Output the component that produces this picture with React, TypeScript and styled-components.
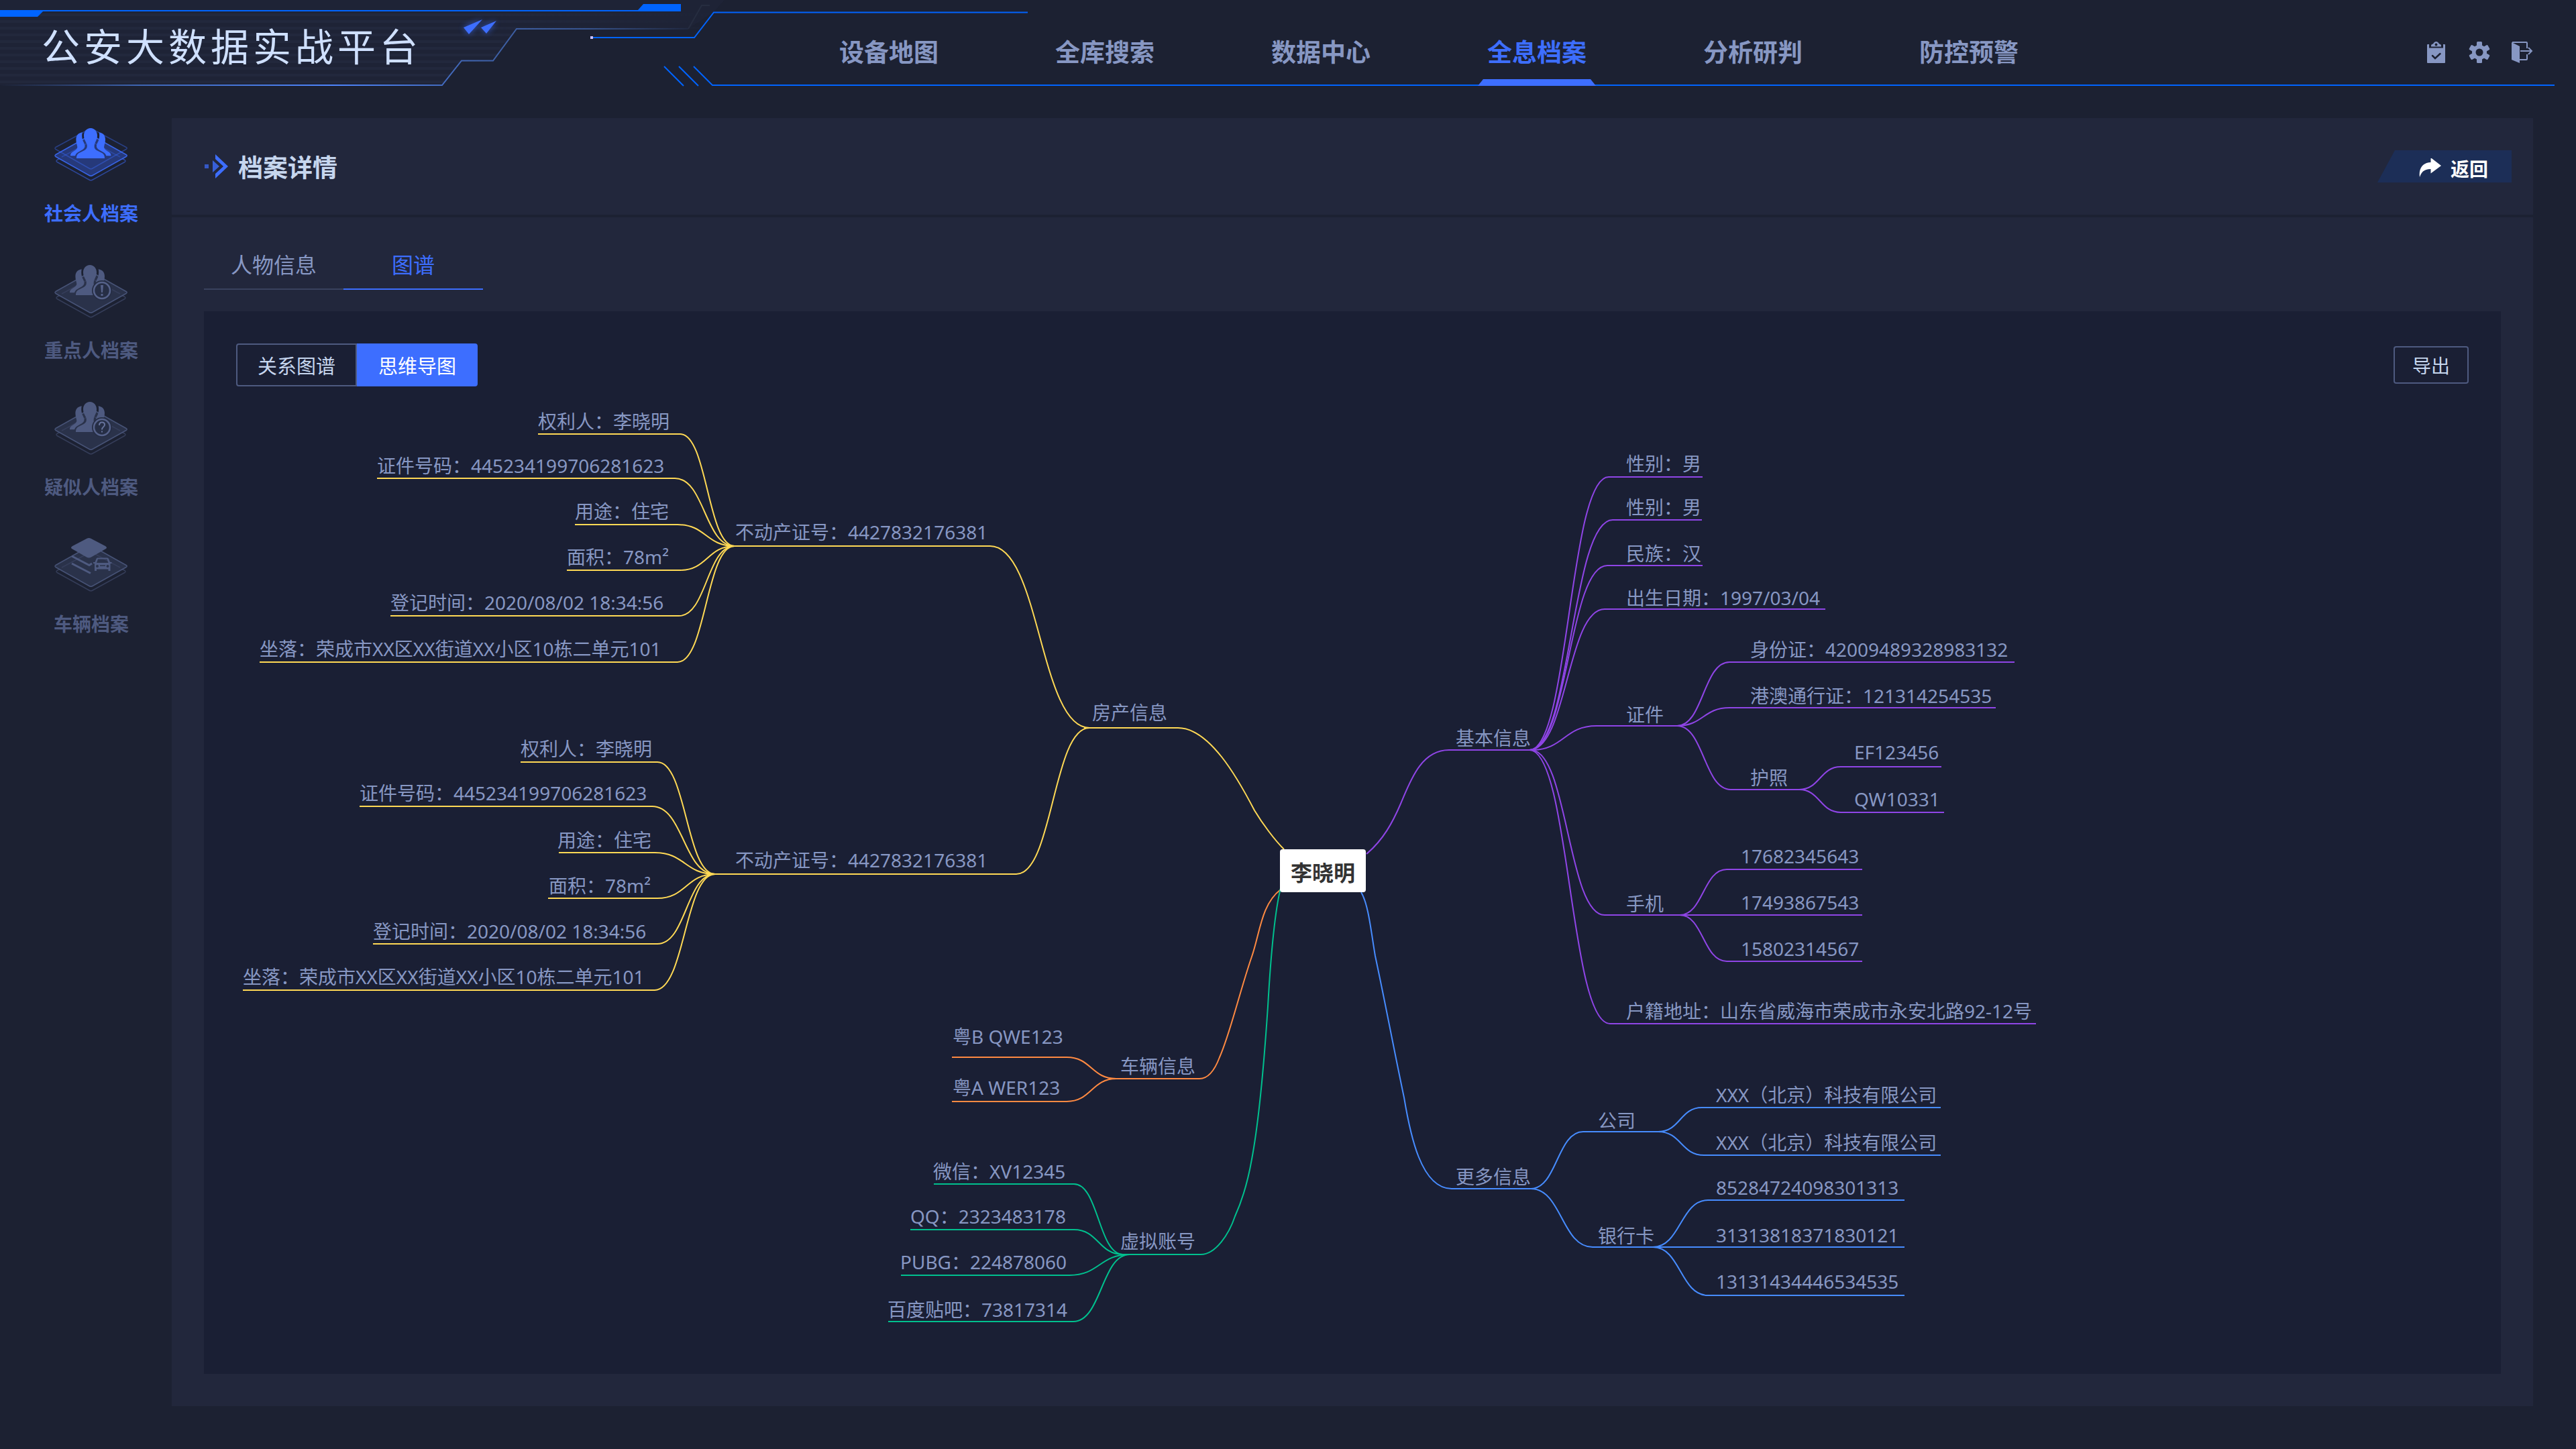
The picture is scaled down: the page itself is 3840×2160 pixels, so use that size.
import React from 'react';
import styled, { createGlobalStyle } from 'styled-components';

const color = {
  page: '#1c2132',
  panel: '#22273c',
  board: '#1a1f34',
  accent: '#3d6eff',
  line: '#0064ff',
  text: '#8797c3',
  bright: '#c6d6ee',
  muted: '#4e5a80',
};

const uiFont = '"Noto Sans CJK SC", "Noto Sans", sans-serif';
const mapFont = '"Noto Sans", "Noto Sans CJK SC", sans-serif';

const GlobalStyle = createGlobalStyle`
  *, *::before, *::after { box-sizing: border-box; }
  body { margin: 0; background: ${color.page}; font-family: ${uiFont}; color: ${color.text}; }
  button { font: inherit; color: inherit; background: none; border: 0; padding: 0; cursor: pointer; }
  a { color: inherit; text-decoration: none; }
  h1, h2 { margin: 0; }
  svg { display: block; }
`;

const Page = styled.div`
  display: flex;
  flex-direction: column;
  min-height: 100vh;
`;

/* ---------- header ---------- */

const Header = styled.header`
  position: relative;
  display: flex;
  height: 128px;

  &::after {
    content: '';
    position: absolute;
    left: 1062px;
    right: 32px;
    bottom: 0;
    height: 2px;
    background: ${color.line};
  }
`;

const HeaderArt = styled.svg`
  position: absolute;
  left: 0;
  top: 0;
`;

const Brand = styled.h1`
  position: relative;
  flex: 0 0 1237px;
  padding: 24px 0 0 62px;
  font-size: 57px;
  font-weight: 400;
  line-height: 84px;
  letter-spacing: 6px;
  color: #cfe0ff;
`;

const Nav = styled.nav`
  position: relative;
  z-index: 1;
  display: flex;
  gap: 146px;
`;

const NavLink = styled.a<{ $active: boolean }>`
  display: flex;
  flex-direction: column;
  justify-content: space-between;
  width: 176px;
  padding-top: 52px;
  font-size: 37px;
  font-weight: 700;
  line-height: 48px;
  text-align: center;
  color: ${(p) => (p.$active ? color.accent : color.text)};

  &::after {
    content: '';
    height: 10px;
    background: ${(p) => (p.$active ? color.accent : 'transparent')};
    clip-path: polygon(8px 0, calc(100% - 8px) 0, 100% 100%, 0 100%);
  }
`;

const Tools = styled.div`
  display: flex;
  gap: 32px;
  margin-left: auto;
  padding: 62px 64px 0 0;
`;

const ToolButton = styled.button`
  width: 32px;
  height: 32px;
  color: #8797c3;
`;

/* ---------- body ---------- */

const Body = styled.div`
  display: flex;
  flex: 1;
  padding: 48px 64px 64px 0;
`;

const Sidebar = styled.nav`
  display: flex;
  flex-direction: column;
  flex: 0 0 256px;
  gap: 56px;
  padding: 14px 0 0 16px;
`;

const SideLink = styled.a<{ $active: boolean }>`
  display: flex;
  flex-direction: column;
  align-items: center;
  gap: 24px;
  font-size: 28px;
  font-weight: 700;
  line-height: 42px;
  color: ${(p) => (p.$active ? color.accent : color.muted)};
`;

const Main = styled.main`
  display: flex;
  flex: 1;
  flex-direction: column;
  gap: 4px;
  min-width: 0;
`;

const PanelHead = styled.div`
  display: flex;
  align-items: center;
  justify-content: space-between;
  height: 144px;
  padding: 0 32px 0 48px;
  background: ${color.panel};
`;

const PanelTitle = styled.h2`
  display: flex;
  align-items: center;
  gap: 14px;
  font-size: 37px;
  line-height: 48px;
  color: ${color.bright};
`;

const BackButton = styled.button`
  display: flex;
  align-items: center;
  gap: 14px;
  width: 200px;
  height: 48px;
  padding: 5px 0 0 62px;
  background: #1c2e57;
  clip-path: polygon(26px 0, 100% 0, 100% 100%, 0 100%);
  font-size: 28px;
  font-weight: 700;
  line-height: 42px;
  color: #fff;
`;

const PanelBody = styled.section`
  display: flex;
  flex: 1;
  flex-direction: column;
  padding: 36px 48px 48px;
  background: ${color.panel};
`;

const Tabs = styled.div`
  display: flex;
  margin-bottom: 32px;
`;

const Tab = styled.button<{ $active: boolean }>`
  width: 208px;
  height: 72px;
  padding-bottom: 4px;
  border-bottom: 2px solid ${(p) => (p.$active ? color.accent : '#39425e')};
  font-size: 32px;
  line-height: 48px;
  color: ${(p) => (p.$active ? color.accent : color.text)};
`;

const Board = styled.div`
  flex: 1;
  padding: 48px;
  background: ${color.board};
`;

const Toolbar = styled.div`
  display: flex;
  align-items: center;
  justify-content: space-between;
`;

const Switch = styled.div`
  display: flex;
`;

const SwitchButton = styled.button<{ $active: boolean }>`
  width: 180px;
  height: 64px;
  border: 2px solid ${(p) => (p.$active ? color.accent : color.muted)};
  border-radius: ${(p) => (p.$active ? '0 4px 4px 0' : '4px 0 0 4px')};
  background: ${(p) => (p.$active ? color.accent : 'transparent')};
  font-size: 29px;
  line-height: 44px;
  color: ${(p) => (p.$active ? '#fff' : color.bright)};
`;

const ExportButton = styled.button`
  width: 112px;
  height: 56px;
  border: 2px solid ${color.muted};
  border-radius: 4px;
  font-size: 28px;
  line-height: 44px;
  color: ${color.bright};
`;

/* ---------- mind map ---------- */

const Stage = styled.div`
  position: relative;
  width: 3328px;
  height: 1424px;
  margin: 0 auto;
  font-family: ${mapFont};
`;

const Links = styled.svg`
  position: absolute;
  inset: 0;
  fill: none;
  stroke-width: 2;
`;

const Node = styled.div`
  position: absolute;
  font-size: 28px;
  line-height: 40px;
  white-space: nowrap;
`;

const RootNode = styled.div`
  position: absolute;
  left: 1556px;
  top: 690px;
  display: flex;
  align-items: center;
  justify-content: center;
  width: 128px;
  height: 64px;
  padding-top: 6px;
  border-radius: 4px;
  background: #fff;
  font-size: 32px;
  font-weight: 700;
  line-height: 44px;
  color: #333;
`;

/* Map coordinates start at this point of the drawing. */
const ORIGIN = { x: 352, y: 576 };
const STAGE = { width: 3328, height: 1424 };
const HALF_LINE = 21;

type MapNode = { text: string; x: number; y: number };

const propertyLeaves = [
  '权利人：李晓明',
  '证件号码：445234199706281623',
  '用途：住宅',
  '面积：78m²',
  '登记时间：2020/08/02 18:34:56',
  '坐落：荣成市XX区XX街道XX小区10栋二单元101',
];

const leaves = (spots: [number, number][]): MapNode[] =>
  propertyLeaves.map((text, i) => ({ text, x: spots[i][0], y: spots[i][1] }));

const nodes: MapNode[] = [
  ...leaves([[802, 629], [562, 695], [857, 763], [845, 831], [582, 899], [387, 968]]),
  ...leaves([[776, 1117], [536, 1183], [831, 1253], [818, 1321], [556, 1389], [362, 1457]]),
  { text: '不动产证号：4427832176381', x: 1096, y: 794 },
  { text: '不动产证号：4427832176381', x: 1096, y: 1283 },
  { text: '房产信息', x: 1628, y: 1063 },
  { text: '粤B QWE123', x: 1420, y: 1546 },
  { text: '粤A WER123', x: 1420, y: 1622 },
  { text: '车辆信息', x: 1670, y: 1590 },
  { text: '微信：XV12345', x: 1391, y: 1747 },
  { text: 'QQ：2323483178', x: 1357, y: 1814 },
  { text: 'PUBG：224878060', x: 1342, y: 1882 },
  { text: '百度贴吧：73817314', x: 1323, y: 1953 },
  { text: '虚拟账号', x: 1670, y: 1851 },
  { text: '基本信息', x: 2170, y: 1101 },
  { text: '性别：男', x: 2424, y: 692 },
  { text: '性别：男', x: 2424, y: 757 },
  { text: '民族：汉', x: 2424, y: 826 },
  { text: '出生日期：1997/03/04', x: 2424, y: 892 },
  { text: '证件', x: 2424, y: 1066 },
  { text: '身份证：42009489328983132', x: 2609, y: 969 },
  { text: '港澳通行证：121314254535', x: 2609, y: 1038 },
  { text: '护照', x: 2609, y: 1160 },
  { text: 'EF123456', x: 2764, y: 1122 },
  { text: 'QW10331', x: 2764, y: 1192 },
  { text: '手机', x: 2424, y: 1348 },
  { text: '17682345643', x: 2595, y: 1277 },
  { text: '17493867543', x: 2595, y: 1346 },
  { text: '15802314567', x: 2595, y: 1415 },
  { text: '户籍地址：山东省威海市荣成市永安北路92-12号', x: 2424, y: 1508 },
  { text: '更多信息', x: 2170, y: 1755 },
  { text: '公司', x: 2382, y: 1671 },
  { text: 'XXX（北京）科技有限公司', x: 2558, y: 1633 },
  { text: 'XXX（北京）科技有限公司', x: 2558, y: 1704 },
  { text: '银行卡', x: 2382, y: 1843 },
  { text: '85284724098301313', x: 2558, y: 1771 },
  { text: '31313818371830121', x: 2558, y: 1842 },
  { text: '13131434446534535', x: 2558, y: 1911 },
];

/* An underline from `edge` to `bend`, then an S curve to the joint. */
const branch = (edge: number, bend: number, y: number, jx: number, jy: number) => {
  const half = (jx - bend) / 2;
  return `M${edge} ${y}H${bend}C${bend + half} ${y} ${jx - half} ${jy} ${jx} ${jy}`;
};

const branches: { stroke: string; paths: string[] }[] = [
  {
    stroke: '#ffd955',
    paths: [
      branch(802, 1014, 647, 1095, 814),
      branch(562, 1006, 713, 1095, 814),
      branch(857, 1010, 782, 1095, 814),
      branch(845, 1014, 850, 1095, 814),
      branch(582, 1012, 918, 1095, 814),
      branch(387, 1010, 987, 1095, 814),
      branch(776, 980, 1136, 1066, 1303),
      branch(536, 972, 1202, 1066, 1303),
      branch(833, 976, 1271, 1066, 1303),
      branch(817, 980, 1339, 1066, 1303),
      branch(556, 980, 1407, 1066, 1303),
      branch(362, 976, 1476, 1066, 1303),
      branch(1090, 1476, 814, 1624, 1085),
      branch(1060, 1515, 1303, 1624, 1085),
      'M1616 1085H1756C1803 1085 1845 1160 1870 1208C1882 1228 1900 1252 1914 1266',
    ],
  },
  {
    stroke: '#ff8a42',
    paths: [
      branch(1419, 1590, 1576, 1664, 1608),
      branch(1419, 1590, 1642, 1664, 1608),
      'M1660 1608H1788C1803 1608 1812 1592 1818 1576C1834 1540 1848 1478 1866 1426C1878 1392 1880 1348 1909 1326',
    ],
  },
  {
    stroke: '#00c08e',
    paths: [
      branch(1392, 1601, 1765, 1674, 1870),
      branch(1357, 1601, 1833, 1674, 1870),
      branch(1343, 1594, 1901, 1684, 1870),
      branch(1324, 1600, 1970, 1684, 1870),
      'M1670 1870H1790C1812 1870 1832 1840 1841 1813C1856 1780 1863 1745 1866 1728C1876 1675 1884 1590 1890 1500C1894 1430 1900 1360 1909 1324',
    ],
  },
  {
    stroke: '#8f45e6',
    paths: [
      'M2037 1273C2062 1252 2076 1226 2088 1198C2102 1165 2118 1118 2160 1118H2285',
      branch(2538, 2398, 711, 2280, 1118),
      branch(2537, 2404, 775, 2280, 1118),
      branch(2538, 2396, 843, 2280, 1118),
      branch(2721, 2392, 908, 2280, 1118),
      branch(2503, 2380, 1082, 2283, 1118),
      branch(2509, 2392, 1364, 2282, 1118),
      branch(3035, 2400, 1526, 2280, 1118),
      branch(3003, 2578, 987, 2500, 1082),
      branch(2975, 2578, 1055, 2500, 1082),
      branch(2684, 2580, 1177, 2500, 1082),
      branch(2894, 2744, 1143, 2682, 1177),
      branch(2898, 2744, 1211, 2682, 1177),
      branch(2776, 2574, 1296, 2504, 1364),
      branch(2776, 2574, 1364, 2504, 1364),
      branch(2776, 2574, 1433, 2504, 1364),
    ],
  },
  {
    stroke: '#478cff',
    paths: [
      'M2029 1330C2040 1348 2044 1390 2050 1425C2066 1500 2078 1565 2093 1636C2102 1690 2118 1772 2164 1772H2284',
      branch(2476, 2360, 1687, 2282, 1772),
      branch(2470, 2374, 1859, 2282, 1772),
      branch(2893, 2537, 1651, 2472, 1687),
      branch(2893, 2540, 1722, 2472, 1687),
      branch(2839, 2546, 1789, 2464, 1859),
      branch(2839, 2546, 1859, 2464, 1859),
      branch(2839, 2546, 1931, 2464, 1859),
    ],
  },
];

const MindMap = () => (
  <Stage>
    <Links
      width={STAGE.width}
      height={STAGE.height}
      viewBox={`${ORIGIN.x} ${ORIGIN.y} ${STAGE.width} ${STAGE.height}`}
      aria-hidden="true"
    >
      {branches.map((group) => (
        <g key={group.stroke} stroke={group.stroke}>
          {group.paths.map((d) => (
            <path key={d} d={d} />
          ))}
        </g>
      ))}
    </Links>
    {nodes.map((node, i) => (
      <Node key={i} style={{ left: node.x - ORIGIN.x, top: node.y - ORIGIN.y - HALF_LINE }}>
        {node.text}
      </Node>
    ))}
    <RootNode>李晓明</RootNode>
  </Stage>
);

/* ---------- drawings ---------- */

const HeaderDecor = () => (
  <HeaderArt width="1540" height="136" viewBox="0 0 1540 136" fill="none" aria-hidden="true">
    <defs>
      <linearGradient id="rim" x1="0" y1="0" x2="1030" y2="0" gradientUnits="userSpaceOnUse">
        <stop offset="0" stopColor="#3a5ea8" stopOpacity="0" />
        <stop offset="0.2" stopColor="#3f66b4" />
        <stop offset="0.48" stopColor="#4f86ff" />
        <stop offset="0.7" stopColor="#3f62aa" />
        <stop offset="0.85" stopColor="#37548f" />
        <stop offset="1" stopColor="#37548f" stopOpacity="0.1" />
      </linearGradient>
      <linearGradient id="fade" x1="0" y1="0" x2="1060" y2="0" gradientUnits="userSpaceOnUse">
        <stop offset="0" stopColor="#22283c" />
        <stop offset="0.7" stopColor="#22283d" />
        <stop offset="1" stopColor="#20263a" stopOpacity="0.3" />
      </linearGradient>
      <pattern id="rows" width="10" height="10" patternUnits="userSpaceOnUse">
        <rect width="10" height="4" fill="#fff" />
      </pattern>
      <mask id="rowMask">
        <rect width="1060" height="128" fill="url(#rows)" />
      </mask>
      <filter id="glow" x="-50%" y="-50%" width="200%" height="200%">
        <feGaussianBlur stdDeviation="5" />
      </filter>
    </defs>
    <path d="M0 0H1080L1064 18L1026 43H770L735 90H688L659 127H0Z" fill="#1e2336" />
    <path d="M0 18H1060L1050 43H770L735 90H688L659 127H0Z" fill="url(#fade)" mask="url(#rowMask)" />
    <path d="M0 127H659L688 90.500H735L770 43H1026" stroke="url(#rim)" strokeWidth="2" />
    <path d="M1026 43L1046 8H1058" stroke="#262d40" strokeWidth="2" />
    <path d="M0 15H951L959 6H1015V17H64L56 25H0Z" fill={color.line} />
    <path
      d="M691 41L719 29L699 51ZM717 41L740 31L725 50Z"
      fill={color.accent}
      filter="url(#glow)"
      opacity="0.7"
    />
    <path d="M691 41L719 29L699 51ZM717 41L740 31L725 50Z" fill={color.accent} />
    <path d="M882 56H1035L1064 18.500H1532" stroke={color.line} strokeWidth="2" />
    <path d="M880 54h4v4h-4z" fill="#c9bfff" />
    <path d="M990 99L1019 128M1012 99L1041 128M1034 99L1062 127H1070" stroke={color.line} strokeWidth="2" />
  </HeaderArt>
);

const ClipboardIcon = () => (
  <svg width="32" height="32" viewBox="0 0 32 32" aria-hidden="true">
    <path
      fill="currentColor"
      d="M3 4H5V9.500H26V4H28Q29 4 29 5V31Q29 32 28 32H3Q2 32 2 31V5Q2 4 3 4Z"
    />
    <path
      fill="currentColor"
      fillRule="evenodd"
      d="M8 7.500V6Q8 4 11 3.500Q12.500 0 15.500 0Q18.500 0 20 3.500Q23 4 23 6V7.500ZM15.500 2.500A2 2 0 1 0 15.500 6.500A2 2 0 1 0 15.500 2.500Z"
    />
    <path d="M10 21L14 25L21.500 18" fill="none" stroke={color.page} strokeWidth="2.500" strokeLinecap="round" />
  </svg>
);

const GearIcon = () => (
  <svg width="32" height="32" viewBox="0 0 32 32" aria-hidden="true">
    <g fill="currentColor">
      {[0, 60, 120].map((angle) => (
        <rect key={angle} x="12" y="0" width="8" height="32" rx="1.500" transform={`rotate(${angle} 16 16)`} />
      ))}
      <circle cx="16" cy="16" r="11" />
    </g>
    <circle cx="16" cy="16" r="5.500" fill={color.page} />
  </svg>
);

const ExitIcon = () => (
  <svg width="32" height="32" viewBox="0 0 32 32" aria-hidden="true">
    <path fill="currentColor" d="M0 1L12 7V32L0 27Z" />
    <path
      d="M1 1H22Q23 1 23 2V10M12 27H22Q23 27 23 26V19M13 14H30M25 9L30 14L25 19"
      fill="none"
      stroke="currentColor"
      strokeWidth="2"
    />
  </svg>
);

const TitleMark = () => (
  <svg width="37" height="36" viewBox="0 0 37 36" aria-hidden="true">
    <g fill={color.accent}>
      <path d="M17 0L36 18L17 36V29L29 18L17 7Z" />
      <path d="M13 9L23 18L13 27Z" opacity="0.8" />
      <path d="M1 15H7V21H1Z" opacity="0.7" />
    </g>
  </svg>
);

const BackArrow = () => (
  <svg width="33" height="30" viewBox="0 0 33 30" aria-hidden="true">
    <path fill="#fff" d="M1 28C-1 15 6 6 17.500 6V-1L33 11L17.500 22.500V16C9 16 4 19 1 28Z" />
  </svg>
);

type Badge = 'none' | 'alert' | 'question' | 'car';

const sidePerson =
  'M41.7 7.3C36 8 32.4 12 32.4 18C32.4 23 34 26 34.3 29C34.5 32 31 34 28 36C24.5 38 24 40 24 42.3H31C32 39 34 37.5 37 36C42 33.5 45.5 31 45.5 28C45.5 24 43 22 42 18C41 14 41 11 41.7 7.3Z';

const People = () => (
  <g fill="currentColor">
    <path d="M54 1C60 1 64 6 64 12C64 18 61 21 60 25C59 30 60 32 63 34L70 37.500C74 39.500 75 42 75 46H33C33 42 34 39.500 38 37.500L45 34C48 32 49.500 30 48.500 25C47 21 44 18 44 12C44 6 48 1 54 1Z" />
    <path d={sidePerson} />
    <path transform="translate(108.4 0) scale(-1 1)" d={sidePerson} />
  </g>
);

const LayerIcon = ({ badge }: { badge: Badge }) => {
  const active = badge === 'none';
  const base = active ? '#26397a' : '#2a324a';
  return (
    <svg width="110" height="82" viewBox="0 0 110 82" fill="none" aria-hidden="true">
      <g stroke="currentColor" strokeWidth="1.500" strokeLinejoin="round">
        <path d="M4 51.500Q2 50 4 48.500L52 22Q54.500 20.500 57 22L105 48.500Q107 50 105 51.500L57 78Q54.500 79.500 52 78Z" opacity="0.5" />
        <path
          d="M2 43.500Q0 42 2 40.500L52 12.500Q54.500 11 57 12.500L107 40.500Q109.500 42 107 43.500L57 71.500Q54.500 73 52 71.500Z"
          fill={base}
          strokeOpacity="0.85"
        />
        <path d="M11 44L52 22Q54.500 20.500 57 22L98 44" opacity="0.3" />
        {active && (
          <path
            d="M2 32.500Q0 31 2 29.500L52 2.500Q54.500 1 57 2.500L107 29.500Q109.500 31 107 32.500L57 61Q54.500 62.500 52 61Z"
            opacity="0.4"
          />
        )}
      </g>
      {active && <People />}
      {(badge === 'alert' || badge === 'question') && (
        <>
          <g transform="translate(-1 0)">
            <People />
          </g>
          <circle cx="71" cy="39" r="15" fill="#262e45" />
          <circle cx="71" cy="39" r="12" stroke="#56628a" strokeWidth="2.500" />
          {badge === 'alert' ? (
            <path d="M69 31h4l-1 11h-2zM69.500 44h3v3h-3z" fill="#56628a" />
          ) : (
            <path
              d="M67 36Q67 31.500 71 31.500Q75 31.500 75 35Q75 37 73 38.500Q71 40 71 42.500M71 44.500V46.500"
              stroke="#66739c"
              strokeWidth="2"
            />
          )}
        </>
      )}
      {badge === 'car' && (
        <>
          <path d="M26 27L52 40.500L56 38M26 38L54 52.500" stroke="currentColor" strokeWidth="3" />
          <path
            d="M27 16.500Q23 14.500 27 12L48 1Q51.500 -1 55 1L76 12Q80 14.500 76 16.500L55 28.500Q51.500 30.500 48 28.500Z"
            fill="currentColor"
          />
          <path
            fill="currentColor"
            fillRule="evenodd"
            d="M64 29.500H79Q80.500 29.500 81 31L83 36H85.500V38H83.500V49H80.500V46.500H63V49H60V38H58V36H60.500L62.500 31Q63 29.500 64 29.500ZM65 31.500L63 37H80.500L78.500 31.500ZM64 40A2 2 0 1 0 64 44A2 2 0 1 0 64 40ZM79.500 40A2 2 0 1 0 79.500 44A2 2 0 1 0 79.500 40ZM68 40.500V42H76V40.500Z"
          />
        </>
      )}
    </svg>
  );
};

/* ---------- page ---------- */

const navItems = ['设备地图', '全库搜索', '数据中心', '全息档案', '分析研判', '防控预警'];

const sideItems: { label: string; badge: Badge }[] = [
  { label: '社会人档案', badge: 'none' },
  { label: '重点人档案', badge: 'alert' },
  { label: '疑似人档案', badge: 'question' },
  { label: '车辆档案', badge: 'car' },
];

export default function App() {
  return (
    <Page>
      <GlobalStyle />
      <Header>
        <HeaderDecor />
        <Brand>公安大数据实战平台</Brand>
        <Nav>
          {navItems.map((item) => (
            <NavLink key={item} href="#" $active={item === '全息档案'}>
              {item}
            </NavLink>
          ))}
        </Nav>
        <Tools>
          <ToolButton type="button" aria-label="任务">
            <ClipboardIcon />
          </ToolButton>
          <ToolButton type="button" aria-label="设置">
            <GearIcon />
          </ToolButton>
          <ToolButton type="button" aria-label="退出">
            <ExitIcon />
          </ToolButton>
        </Tools>
      </Header>
      <Body>
        <Sidebar>
          {sideItems.map((item, i) => (
            <SideLink key={item.label} href="#" $active={i === 0}>
              <LayerIcon badge={item.badge} />
              {item.label}
            </SideLink>
          ))}
        </Sidebar>
        <Main>
          <PanelHead>
            <PanelTitle>
              <TitleMark />
              档案详情
            </PanelTitle>
            <BackButton type="button">
              <BackArrow />
              返回
            </BackButton>
          </PanelHead>
          <PanelBody>
            <Tabs role="tablist">
              <Tab type="button" role="tab" aria-selected="false" $active={false}>
                人物信息
              </Tab>
              <Tab type="button" role="tab" aria-selected="true" $active>
                图谱
              </Tab>
            </Tabs>
            <Board>
              <Toolbar>
                <Switch>
                  <SwitchButton type="button" $active={false}>
                    关系图谱
                  </SwitchButton>
                  <SwitchButton type="button" $active>
                    思维导图
                  </SwitchButton>
                </Switch>
                <ExportButton type="button">导出</ExportButton>
              </Toolbar>
              <MindMap />
            </Board>
          </PanelBody>
        </Main>
      </Body>
    </Page>
  );
}
